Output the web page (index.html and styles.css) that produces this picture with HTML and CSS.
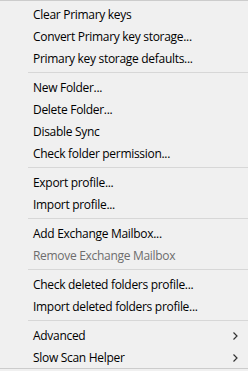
FILE: index.html
```html
<!DOCTYPE html>
<html lang="en">
<head>
  <meta charset="UTF-8">
  <title>Context Menu</title>
  <link rel="stylesheet" href="styles.css">
</head>
<body>
  <div class="menu">
    <div class="menu-item">Clear Primary keys</div>
    <div class="menu-item">Convert Primary key storage...</div>
    <div class="menu-item">Primary key storage defaults...</div>
    <div class="separator"></div>
    <div class="menu-item">New Folder...</div>
    <div class="menu-item">Delete Folder...</div>
    <div class="menu-item">Disable Sync</div>
    <div class="menu-item">Check folder permission...</div>
    <div class="separator"></div>
    <div class="menu-item">Export profile...</div>
    <div class="menu-item">Import profile...</div>
    <div class="separator"></div>
    <div class="menu-item">Add Exchange Mailbox...</div>
    <div class="menu-item disabled">Remove Exchange Mailbox</div>
    <div class="separator"></div>
    <div class="menu-item">Check deleted folders profile...</div>
    <div class="menu-item">Import deleted folders profile...</div>
    <div class="separator"></div>
    <div class="menu-item submenu">Advanced
      <svg class="arrow" width="5" height="8" viewBox="0 0 5 8"><polyline points="0.5,0.5 4,4 0.5,7.5" fill="none" stroke="#333" stroke-width="1.2"/></svg>
    </div>
    <div class="menu-item submenu">Slow Scan Helper
      <svg class="arrow" width="5" height="8" viewBox="0 0 5 8"><polyline points="0.5,0.5 4,4 0.5,7.5" fill="none" stroke="#333" stroke-width="1.2"/></svg>
    </div>
  </div>
</body>
</html>
```

FILE: styles.css
```css
* {
  box-sizing: border-box;
  margin: 0;
  padding: 0;
}

body {
  font-family: "Open Sans", "Noto Sans", Arial, sans-serif;
  font-size: 12px;
  background-color: #f0f0f0;
}

/* Menu box */
.menu {
  width: 248px;
  height: 371px;
  background-color: #f0f0f0;
  border-top: 1px solid #cccccc;
  padding-top: 3px;
}

.menu-item {
  height: 22px;
  line-height: 22px;
  padding-left: 33px;
  padding-right: 10px;
  color: #000;
  letter-spacing: -0.3px;
  white-space: nowrap;
}

.menu-item.disabled {
  color: #6d6d6d;
}

.submenu {
  display: flex;
  justify-content: space-between;
  align-items: center;
}

.menu-item:last-child {
  border-bottom: 1px solid #cccccc;
}

/* Separator line */
.separator {
  height: 1px;
  background-color: #d7d7d7;
  margin: 2px 0 4px 28px;
}
```
